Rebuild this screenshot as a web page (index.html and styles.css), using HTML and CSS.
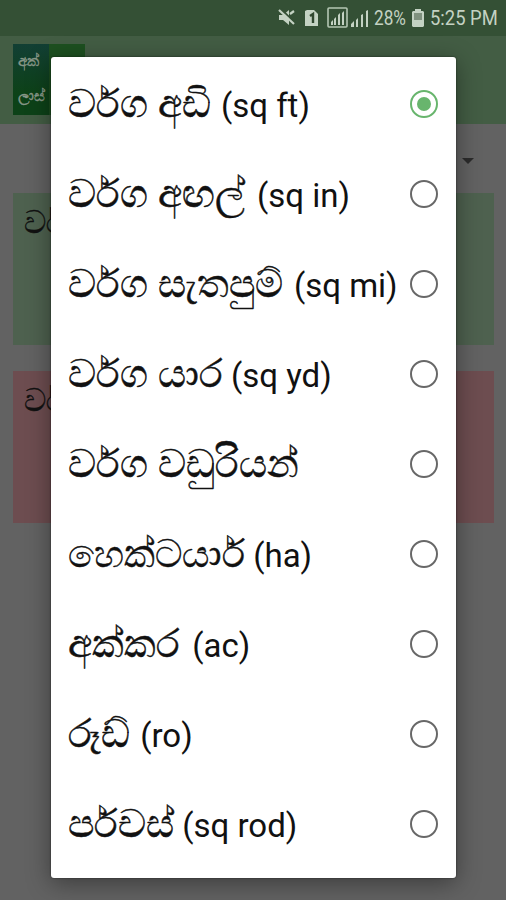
FILE: index.html
```html
<!DOCTYPE html>
<html lang="si">
<head><meta charset="utf-8"><title>Area units</title><link rel="stylesheet" href="styles.css"></head>
<body>
<div class="screen">
  <header class="status">
    <svg class="status-icons" width="94" height="24" viewBox="0 0 94 24">
      <g fill="#c4d2c3">
        <path d="M1 9h4l6-5v15l-6-5H1z"/>
        <path d="M29 4h7l4 4v12H27V5z"/>
        <path d="M53 19v-3l2-2v5zM56 19v-6l2-2v8zM60 19V9l2-2v12zM64 19V7l2-2v14z"/>
        <path d="M73 21v-3l3-3v6zM78 21v-7l2-2v9zM83 21V9l2-1v13zM88 21V5l2-1v17z"/>
      </g>
      <path d="M3 3l14 14" stroke="#345035" stroke-width="2"/>
      <path d="M1 4l15 14M12 8l4-3" stroke="#c4d2c3" stroke-width="2.2"/>
      <path d="M32 10l3-2v9" fill="none" stroke="#30472f" stroke-width="2.4"/>
      <rect x="50" y="2" width="19" height="19" rx="1" fill="none" stroke="#b4c6b3" stroke-width="1.6"/>
    </svg>
    <span class="battery-text">28%</span>
    <svg class="battery" width="12" height="18" viewBox="0 0 12 18"><path d="M3 0h6v2h2l1 1v14l-1 1H1l-1-1V3l1-1h2z" fill="#c4d2c3"/><path d="M2 4h8v7H2z" fill="#7f917e"/></svg>
    <span class="clock">5:25 PM</span>
  </header>
  <div class="appbar"><div class="logo"><span>අක්</span><span>ලාස්</span></div></div>
  <div class="picker"><i class="caret"></i></div>
  <section class="card green"><div class="peek">වර්‌</div></section>
  <section class="card red"><div class="peek">වර්‌</div></section>
</div>
<div class="dialog" role="radiogroup">
  <div class="row"><p><span class="si">වර්‌ග අඩි</span> <span class="en nudge-s">(sq ft)</span></p><i class="radio on"></i></div>
  <div class="row"><p><span class="si">වර්‌ග අඟල්</span> <span class="en nudge-l">(sq in)</span></p><i class="radio"></i></div>
  <div class="row"><p><span class="si">වර්‌ග සැතපුම්</span> <span class="en nudge-m">(sq mi)</span></p><i class="radio"></i></div>
  <div class="row"><p><span class="si">වර්‌ග යාර</span> <span class="en">(sq yd)</span></p><i class="radio"></i></div>
  <div class="row"><p><span class="si">වර්‌ග වඩුරියන්</span></p><i class="radio"></i></div>
  <div class="row"><p><span class="si tight">හෙක්ටයාර්‌</span> <span class="en">(ha)</span></p><i class="radio"></i></div>
  <div class="row"><p><span class="si">අක්කර</span> <span class="en nudge-l">(ac)</span></p><i class="radio"></i></div>
  <div class="row"><p><span class="si">රූඩ්</span> <span class="en nudge-s">(ro)</span></p><i class="radio"></i></div>
  <div class="row"><p><span class="si">පර්‌චස්</span> <span class="en">(sq rod)</span></p><i class="radio"></i></div>
</div>
</body>
</html>
```

FILE: styles.css
```css
* { box-sizing: border-box; }
body { margin: 0; width: 506px; height: 900px; overflow: hidden; background: #626262; font-family: Roboto, "Noto Sans", sans-serif; color: #111; }
.screen { height: 900px; }
.status { height: 36px; background: #345035; display: flex; align-items: center; padding: 0 8px 0 278px; color: #c4d2c3; font-size: 20px; white-space: nowrap; }
.status-icons { flex: none; margin-right: 2px; }
.battery-text { flex: none; width: 34px; transform: scaleX(.86); transform-origin: left; }
.battery { flex: none; margin: 0 6px 0 4px; }
.clock { flex: none; width: 68px; transform: scaleX(.92); transform-origin: left; }
.appbar { height: 88px; background: #435d44; padding: 8px 13px; }
.logo { width: 72px; height: 71px; background: linear-gradient(90deg, transparent 50%, #1d5020 50%), linear-gradient(#123f34, #0d4218 70%); color: #899889; font-size: 15px; display: flex; flex-direction: column; gap: 18px; padding: 9px 5px; line-height: 17px; -webkit-text-stroke: .4px #899889; }
.picker { height: 69px; display: flex; align-items: center; justify-content: flex-end; padding: 5px 32px 0 0; }
.caret { border: 6px solid transparent; border-top-color: #2b2b2b; border-bottom: 0; }
.card { height: 152px; margin: 0 12px 26px 13px; padding: 12px 11px; font-size: 31px; line-height: 36px; -webkit-text-stroke: .4px #111; }
.peek { width: 27px; overflow: hidden; white-space: nowrap; }
.green { background: #4e614f; }
.red { background: #6d4d50; }
.dialog { position: absolute; left: 51px; top: 57px; width: 405px; height: 821px; background: #fff; border-radius: 3px; padding-top: 2px; box-shadow: 0 5px 24px rgba(0,0,0,.4), 0 0 2px rgba(0,0,0,.6); }
.row { height: 90px; display: flex; align-items: center; justify-content: space-between; padding: 0 18px 0 17px; }
.row p { margin: 0; height: 48px; line-height: 48px; white-space: nowrap; font-size: 33px; }
.si { font-size: 39px; -webkit-text-stroke: .5px #111; }
.tight { font-size: 38px; }
.en { font-size: 33px; }
.nudge-s { margin-left: 2px; }
.nudge-m { margin-left: 3px; }
.nudge-l { margin-left: 4px; }
.radio { flex: none; width: 28px; height: 28px; border: 2.5px solid #686868; border-radius: 50%; display: grid; place-items: center; }
.on { border-color: #68b56d; }
.on::after { content: ""; width: 14px; height: 14px; border-radius: 50%; background: #68b56d; }
```
